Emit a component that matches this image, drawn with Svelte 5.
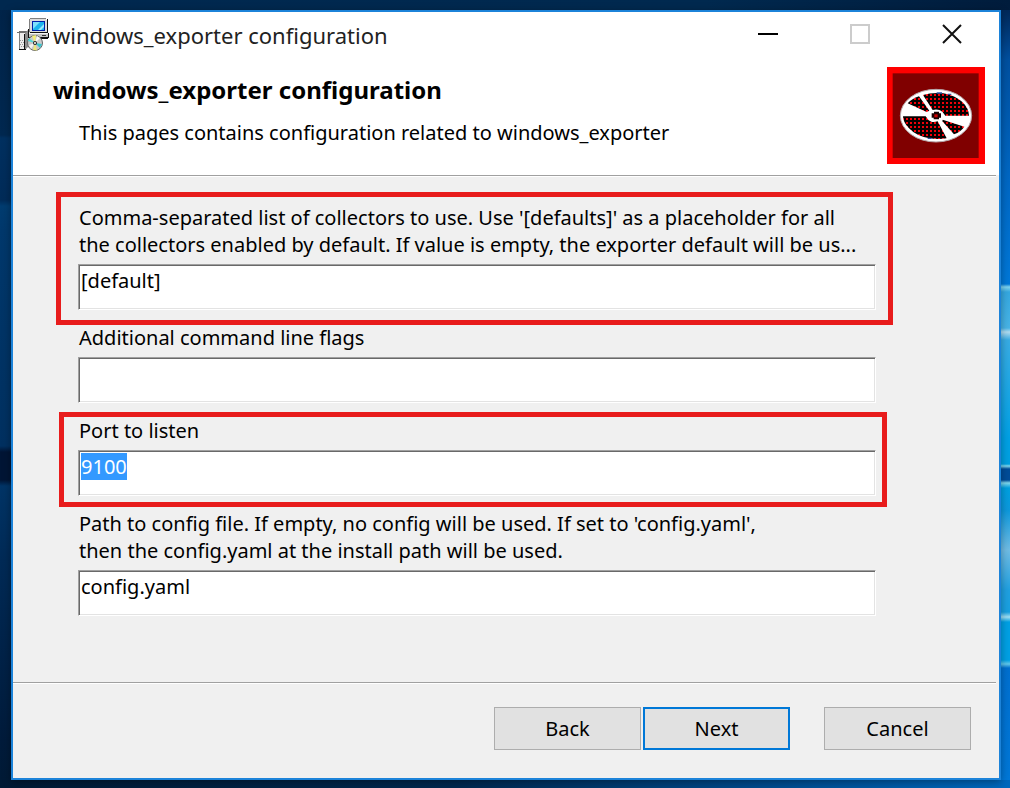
<script>
  import { onMount } from 'svelte';

  let collectors = $state('[default]');
  let flags = $state('');
  let port = $state('9100');
  let config = $state('config.yaml');
  let portInput;

  onMount(() => {
    portInput.focus();
    portInput.select();
  });
</script>

<div class="desktop">
  <main class="window">
    <div class="titlebar">
      <svg class="app-icon" viewBox="0 0 32 33" aria-hidden="true">
        <path d="M12 2h1V1h16v1h1v13H12z" fill="#dcdcdc" />
        <path d="M13 0h16v1H13zM12 1h1v13h-1z" fill="#808080" />
        <path d="M30 1h1v14h-1zM13 14h18v1H13z" fill="#111" />
        <path d="M15 3h13v10H15z" fill="#0020a8" />
        <path d="M16 4h11v8H16z" fill="#1cb4ec" />
        <path d="M16 4h7l-7 7z" fill="#7fe0fc" />
        <path d="M21 12l6-6v3l-3 3z" fill="#9beaff" />
        <path d="M11 15h19v4h1v-4h1v5h-1v1H13v-1h-2z" fill="#111" />
        <path d="M11 15h20v4H11z" fill="#c4c4c4" />
        <path d="M11 15h20v1H11z" fill="#f4f4f4" />
        <path d="M25 17h4v1h-4z" fill="#333" />
        <path d="M0 14h2v-1h9v1l-3 2H2v-1H0z" fill="#707070" />
        <path d="M3 15h5v16H3z" fill="#ececec" />
        <path d="M2 15h1v16H2z" fill="#808080" />
        <path d="M8 15l3-3v17l-3 3z" fill="#8c8c8c" />
        <path d="M7 16h1v16H7zM2 31h7v1H2zM11 11h1v8h-1z" fill="#111" />
        <path d="M3 22h1v1H3zm2 0h1v1H5zm-1 2h1v1H4zm2 0h1v1H6zm-3 2h1v1H3zm2 0h1v1H5zm-1 2h1v1H4zm2 0h1v1H6z" fill="#999" />
        <circle cx="18" cy="25" r="7.5" fill="#c9c9c9" stroke="#666" stroke-width="1" />
        <path d="M18 25l-3-7 4-1z" fill="#f4ee75" />
        <path d="M18 25l-7-2 1-3z" fill="#48d8d8" />
        <path d="M18 25l2-7 3 2z" fill="#f8f8f8" />
        <path d="M18 25l-2 7 4 .5z" fill="#eee878" />
        <path d="M18 25l7 1-2 4z" fill="#37c5cf" />
        <path d="M18 25l-6 2 2 4z" fill="#f2f2f2" />
        <circle cx="18" cy="25" r="2" fill="#222" />
        <circle cx="18" cy="25" r="1" fill="#fff" />
      </svg>
      <span class="caption">windows_exporter configuration</span>
      <div class="controls">
        <button type="button" aria-label="Minimize">
          <svg viewBox="0 0 20 20" shape-rendering="crispEdges"><path d="M0 9h20v2H0z" fill="#000" /></svg>
        </button>
        <button type="button" aria-label="Maximize" disabled>
          <svg viewBox="0 0 20 20" shape-rendering="crispEdges"><path d="M1 1h18v18H1z" fill="none" stroke="#ccc" stroke-width="2" /></svg>
        </button>
        <button type="button" aria-label="Close">
          <svg viewBox="0 0 20 20"><path d="M1 1l18 18M19 1L1 19" stroke="#111" stroke-width="2" /></svg>
        </button>
      </div>
    </div>

    <header>
      <div class="heading">
        <h1>windows_exporter configuration</h1>
        <p>This pages contains configuration related to windows_exporter</p>
      </div>
      <svg class="disc" viewBox="21 21 294 291" aria-hidden="true">
        <defs>
          <pattern id="dots" x="3" y="3" width="12" height="12" patternUnits="userSpaceOnUse">
            <rect width="12" height="12" fill="#080000" />
            <rect x="3" y="3" width="6" height="6" fill="#f00008" />
          </pattern>
        </defs>
        <rect x="21" y="21" width="294" height="291" fill="#f00" />
        <rect x="38" y="40" width="258" height="254" fill="#800000" />
        <ellipse cx="168" cy="167" rx="107" ry="79" fill="#fff" stroke="#b5a5a8" stroke-width="3" />
        <path d="M129 105q26-8 61-5 35 6 58 27 18 18 19 40h-71q-5-11-16-16-10-4-22-1z" fill="url(#dots)" />
        <path d="M200 235q-26 4-55-1-36-6-58-29-18-18-18-36h68q6 12 17 16 8 2 19-1z" fill="url(#dots)" />
        <path d="M83 130q13-14 34-21l31 43-8 4z" fill="url(#dots)" />
        <path d="M188 179l65 21q-10 15-31 23l-35-39z" fill="url(#dots)" />
        <path d="M155 160h7v-5h15v5h6v13h-6v5h-16v-5h-6z" fill="#1a0000" />
        <path d="M163 163h10v9h-10z" fill="#c00" />
        <path d="M170 97h16v4h-16zM203 101h11v4h-11zM143 233h12v4h-12z" fill="#3156a8" />
      </svg>
    </header>

    <form onsubmit={(e) => e.preventDefault()}>
      <div class="fields">
        <div class="field marked wide">
          <label for="collectors">Comma-separated list of collectors to use. Use '[defaults]' as a placeholder for all<br />the collectors enabled by default. If value is empty, the exporter default will be us...</label>
          <input id="collectors" type="text" bind:value={collectors} />
        </div>
        <div class="field">
          <label for="flags">Additional command line flags</label>
          <input id="flags" type="text" bind:value={flags} />
        </div>
        <div class="field marked">
          <label for="port">Port to listen</label>
          <input id="port" type="text" bind:value={port} bind:this={portInput} />
        </div>
        <div class="field">
          <label for="config">Path to config file. If empty, no config will be used. If set to 'config.yaml',<br />then the config.yaml at the install path will be used.</label>
          <input id="config" type="text" spellcheck="false" bind:value={config} />
        </div>
      </div>

      <div class="actions">
        <button type="button">Back</button>
        <button type="submit" class="primary">Next</button>
        <button type="button" class="cancel">Cancel</button>
      </div>
    </form>
  </main>
</div>

<style>
  :global(body) {
    margin: 0;
  }

  .desktop {
    box-sizing: border-box;
    min-height: 100vh;
    padding: 10px 9px 8px 11px;
    display: flex;
    font-family: "Noto Sans", "Open Sans", sans-serif;
    font-size: 20px;
    line-height: 27px;
    font-variant-ligatures: none;
    color: #000;
    background:
      linear-gradient(90deg, #00284f, #00294f 70%, #001c3c) top / 100% 10px no-repeat,
      linear-gradient(90deg, #001a35, #00284f 45%, #004a8c 75%, #0068bd) bottom / 100% 8px no-repeat,
      linear-gradient(#002348, #002850 135px, #003060 138px, #002b58 200px, #003c70 206px, #00386c 230px, #003466 330px, #003060 446px, #001535 452px, #001535 480px, #003466 486px, #002a56 560px, #001b3b 740px, #001a35) left / 11px 100% no-repeat,
      linear-gradient(#00204a, #0050a0 60px, #0068c4 180px, #0078d8 284px, #7fd4f0 287px, #35a8e0 292px, #48b4e6 328px, #b0dcf0 332px, #38ace4 340px, #00a0e4 440px, #00a0e0 464px, #80d8ee 466px, #004c98 469px, #004c98 480px, #80d8ee 483px, #00a0e0 488px, #0c98dc 510px, #70bce4 550px, #20a0e0 590px, #18a0e0 612px, #a0e0f4 617px, #00a0e4 622px, #00a0e4 660px, #60c8ec 664px, #0070d0 668px, #0078d8) right / 9px 100% no-repeat;
  }

  .window {
    box-sizing: border-box;
    flex: 1;
    display: flex;
    flex-direction: column;
    border: 2px solid #1c83d9;
    background: #f0f0f0;
    box-shadow: 0 2px 8px rgba(0, 0, 0, 0.35);
  }

  .titlebar {
    display: flex;
    align-items: center;
    height: 44px;
    padding: 0 1px 4px 4px;
    background: #fff;
  }

  .app-icon {
    width: 32px;
    height: 33px;
    margin-right: 4px;
  }

  .caption {
    padding-top: 2px;
    font-size: 22px;
    color: #222;
  }

  .controls {
    display: flex;
    margin-left: auto;
  }

  .controls button {
    display: flex;
    align-items: center;
    justify-content: center;
    width: 92px;
    height: 44px;
    padding: 0;
    border: 0;
    background: none;
  }

  .controls svg {
    width: 20px;
    height: 20px;
  }

  header {
    display: flex;
    justify-content: space-between;
    padding: 7px 14px 11px 40px;
    background: #fff;
  }

  .heading {
    padding-top: 9px;
  }

  h1 {
    margin: 0;
    font-size: 24px;
    line-height: 27px;
    font-weight: 700;
  }

  .heading p {
    margin: 16px 0 0 26px;
  }

  .disc {
    width: 98px;
    height: 97px;
  }

  form {
    flex: 1;
    display: flex;
    flex-direction: column;
  }

  .fields,
  .actions {
    position: relative;
  }

  .fields::before,
  .actions::before {
    content: "";
    position: absolute;
    inset: 0 3px auto 0;
    height: 1px;
    background: #a0a0a0;
    border-bottom: 1px solid #fff;
  }

  .fields {
    flex: 1;
    display: flex;
    flex-direction: column;
    gap: 14px;
    padding: 29px 123px 29px 65px;
  }

  .field {
    position: relative;
    display: flex;
    flex-direction: column;
    gap: 6px;
  }

  label {
    padding-left: 1px;
    white-space: nowrap;
  }

  .marked::after {
    content: "";
    position: absolute;
    inset: -5px -11px -11px -19px;
    border: 5px solid #e81c1c;
    pointer-events: none;
  }

  .marked.wide::after {
    inset: -12px -17px -15px -22px;
  }

  input {
    box-sizing: border-box;
    width: 100%;
    height: 46px;
    padding: 1px 2px 15px;
    border: 1px solid;
    border-color: #a0a0a0 #fff #fff #a0a0a0;
    border-radius: 0;
    outline: 0;
    background: #fff;
    box-shadow: inset 1px 1px #696969, inset -1px -1px #e3e3e3;
    color: #000;
    font: inherit;
  }

  input::selection {
    background: #3399ff;
    color: #fff;
  }

  .actions {
    display: flex;
    justify-content: flex-end;
    gap: 2px;
    padding: 25px 28px 28px;
  }

  .actions button {
    width: 147px;
    height: 43px;
    padding: 0;
    border: 1px solid #adadad;
    border-radius: 0;
    background: #e1e1e1;
    color: #000;
    font: inherit;
  }

  .actions .primary {
    border: 2px solid #0078d7;
  }

  .actions .cancel {
    margin-left: 32px;
  }
</style>
